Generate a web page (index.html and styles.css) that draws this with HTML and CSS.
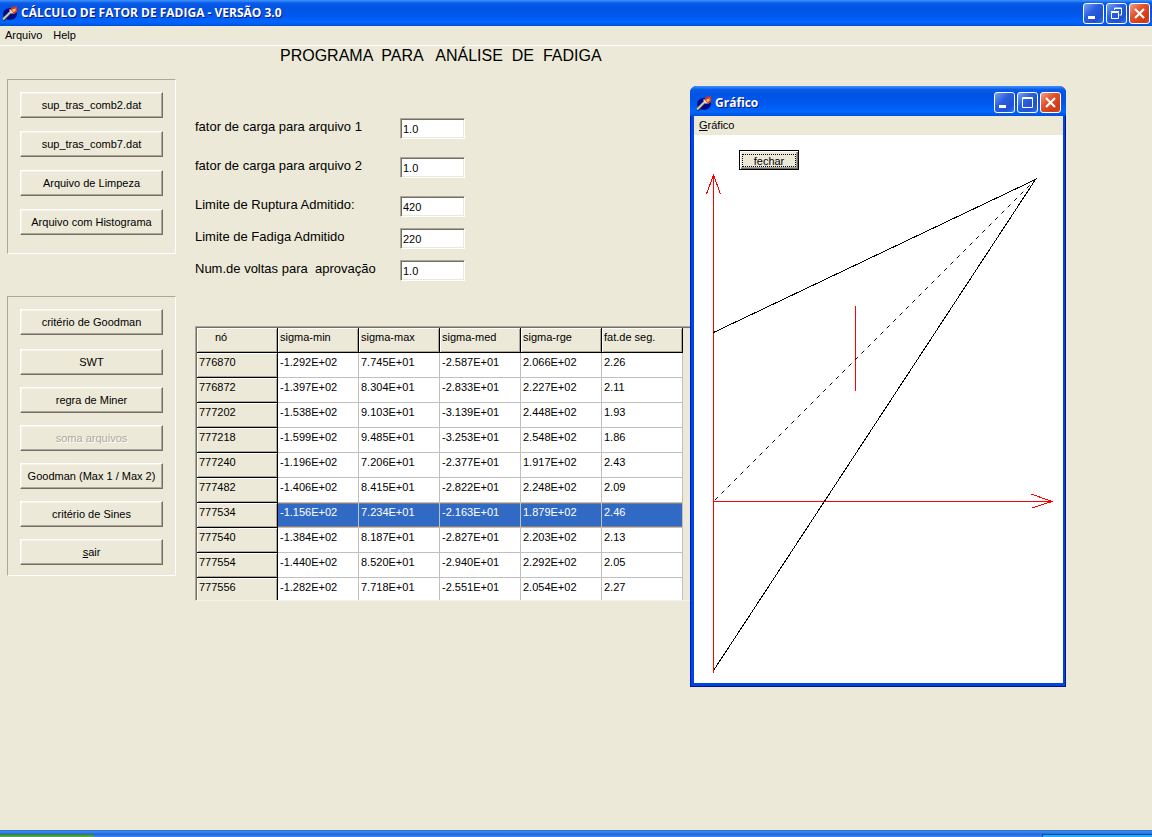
FILE: index.html
```html
<!DOCTYPE html>
<html lang="pt-BR">
<head>
<meta charset="utf-8">
<title>Cálculo de Fator de Fadiga</title>
<link rel="stylesheet" href="styles.css">
</head>
<body>
<svg width="0" height="0" class="defs" aria-hidden="true">
  <symbol id="torch" viewBox="0 0 16 16">
    <ellipse cx="8" cy="9" rx="7" ry="6" fill="#000a8c"/>
    <path d="M1 15L10 6" stroke="#222" stroke-width="3.600"/>
    <path d="M1 14.500L10 5.500" stroke="#c8c8c8" stroke-width="2.200"/>
    <path d="M7 4.500l3 0 3 4-4 0z" fill="#ddd"/>
    <path d="M9 5V2l2 1 1-3 1 2 2-1v6l-3 2z" fill="#e8301c"/>
    <path d="M10.500 6V4l2 0 1-1v3l-2 1z" fill="#ffd23c"/>
  </symbol>
  <symbol id="close" viewBox="0 0 19 19">
    <path d="M5 5l9 9M14 5l-9 9" stroke="#fff" stroke-width="2.200"/>
  </symbol>
  <symbol id="minimize" viewBox="0 0 19 19"><path d="M4 12h7v3H4z" fill="#fff"/></symbol>
</svg>

<header class="titlebar">
  <svg class="app-icon"><use href="#torch"/></svg>
  <h1 class="title">CÁLCULO DE FATOR DE FADIGA - VERSÃO 3.0</h1>
  <div class="controls">
    <button class="control" aria-label="Minimizar"><svg><use href="#minimize"/></svg></button>
    <button class="control" aria-label="Restaurar"><svg viewBox="0 0 19 19"><path d="M7.500 6V4h7v7h-2M7 4.500h8" fill="none" stroke="#fff"/><path d="M4.500 8.500h7v6h-7zM4 7.500h8" fill="none" stroke="#fff"/></svg></button>
    <button class="control control-close" aria-label="Fechar janela"><svg><use href="#close"/></svg></button>
  </div>
</header>
<nav class="menubar">
  <button class="menu">Arquivo</button>
  <button class="menu">Help</button>
</nav>

<main class="workspace">
  <h2 class="heading">PROGRAMA  PARA   ANÁLISE  DE  FADIGA</h2>
  <div class="columns">
    <div class="sidebar">
      <section class="panel">
        <button class="btn">sup_tras_comb2.dat</button>
        <button class="btn">sup_tras_comb7.dat</button>
        <button class="btn">Arquivo de Limpeza</button>
        <button class="btn">Arquivo com Histograma</button>
      </section>
      <section class="panel panel-criteria">
        <button class="btn btn-first">critério de Goodman</button>
        <button class="btn">SWT</button>
        <button class="btn">regra de Miner</button>
        <button class="btn" disabled>soma arquivos</button>
        <button class="btn">Goodman (Max 1 / Max 2)</button>
        <button class="btn">critério de Sines</button>
        <button class="btn"><u>s</u>air</button>
      </section>
    </div>
    <div class="content">
      <form class="form">
        <div class="fields fields-load">
          <label for="f1">fator de carga para arquivo 1</label><input id="f1" type="text" value="1.0">
          <label for="f2">fator de carga para arquivo 2</label><input id="f2" type="text" value="1.0">
        </div>
        <div class="fields">
          <label for="rup">Limite de Ruptura Admitido:</label><input id="rup" type="text" value="420">
          <label for="fad">Limite de Fadiga Admitido</label><input id="fad" type="text" value="220">
          <label for="vol">Num.de voltas para  aprovação</label><input id="vol" type="text" value="1.0">
        </div>
      </form>
      <div class="grid-box">
        <table class="grid">
          <thead><tr><th class="node-head">nó</th><th>sigma-min</th><th>sigma-max</th><th>sigma-med</th><th>sigma-rge</th><th>fat.de seg.</th></tr></thead>
          <tbody>
            <tr><th>776870</th><td>-1.292E+02</td><td>7.745E+01</td><td>-2.587E+01</td><td>2.066E+02</td><td>2.26</td></tr>
            <tr><th>776872</th><td>-1.397E+02</td><td>8.304E+01</td><td>-2.833E+01</td><td>2.227E+02</td><td>2.11</td></tr>
            <tr><th>777202</th><td>-1.538E+02</td><td>9.103E+01</td><td>-3.139E+01</td><td>2.448E+02</td><td>1.93</td></tr>
            <tr><th>777218</th><td>-1.599E+02</td><td>9.485E+01</td><td>-3.253E+01</td><td>2.548E+02</td><td>1.86</td></tr>
            <tr><th>777240</th><td>-1.196E+02</td><td>7.206E+01</td><td>-2.377E+01</td><td>1.917E+02</td><td>2.43</td></tr>
            <tr><th>777482</th><td>-1.406E+02</td><td>8.415E+01</td><td>-2.822E+01</td><td>2.248E+02</td><td>2.09</td></tr>
            <tr class="selected"><th>777534</th><td>-1.156E+02</td><td>7.234E+01</td><td>-2.163E+01</td><td>1.879E+02</td><td>2.46</td></tr>
            <tr><th>777540</th><td>-1.384E+02</td><td>8.187E+01</td><td>-2.827E+01</td><td>2.203E+02</td><td>2.13</td></tr>
            <tr><th>777554</th><td>-1.440E+02</td><td>8.520E+01</td><td>-2.940E+01</td><td>2.292E+02</td><td>2.05</td></tr>
            <tr class="last"><th>777556</th><td>-1.282E+02</td><td>7.718E+01</td><td>-2.551E+01</td><td>2.054E+02</td><td>2.27</td></tr>
          </tbody>
        </table>
      </div>
    </div>
  </div>
</main>

<section class="window" aria-label="Gráfico">
  <header class="titlebar window-title">
    <svg class="app-icon"><use href="#torch"/></svg>
    <h2 class="title">Gráfico</h2>
    <div class="controls">
      <button class="control" aria-label="Minimizar"><svg><use href="#minimize"/></svg></button>
      <button class="control" aria-label="Maximizar"><svg viewBox="0 0 19 19"><path d="M4.500 4.500h10v10h-10zM4 5.500h11" fill="none" stroke="#fff"/></svg></button>
      <button class="control control-close" aria-label="Fechar gráfico"><svg><use href="#close"/></svg></button>
    </div>
  </header>
  <nav class="menubar window-menu"><button class="menu"><u>G</u>ráfico</button></nav>
  <div class="chart-area">
    <svg class="chart" viewBox="0 0 369 548" fill="none" role="img" aria-label="Diagrama de Goodman">
      <g shape-rendering="crispEdges">
        <path d="M19.500 40V538M19 366.500H357M12.500 59L19.500 40L26.500 59M337 359L358 366.500L338 373" stroke="#f00"/>
        <path d="M161.500 171V256" stroke="#f00"/>
        <path d="M19.500 197.500L341.500 44.500L19.500 535.500" stroke="#000"/>
      </g>
      <path d="M21 365L341 45" stroke="#000" stroke-dasharray="4 5"/>
    </svg>
    <button class="btn btn-close-chart"><span>fechar</span></button>
  </div>
</section>

<footer class="taskbar"><div class="start"></div><div class="tray"></div></footer>
</body>
</html>
```
FILE: styles.css
```css
* { box-sizing: border-box; }

body {
  margin: 0;
  min-height: 100vh;
  display: flex;
  flex-direction: column;
  position: relative;
  background: #ece9d8;
  color: #000;
  font: 11px/13px "Liberation Sans", Arial, sans-serif;
}

button, input { font: inherit; color: inherit; }
h1, h2 { margin: 0; }
.defs { position: absolute; }

.titlebar {
  display: flex;
  align-items: center;
  height: 26px;
  padding: 0 2px;
  background: linear-gradient(#3d95ff 0, #0a5ae8 12%, #0054e3 30%, #0058ee 60%, #0066ff 85%, #0050d8 100%);
}
.app-icon { width: 16px; height: 16px; margin-right: 3px; }
.title {
  flex: 1;
  color: #fff;
  font: bold 12px/16px "Open Sans", "Noto Sans", sans-serif;
  text-shadow: 1px 1px #0a1883;
}
.controls { display: flex; gap: 2px; }
.control {
  width: 21px;
  height: 21px;
  padding: 0;
  border: 1px solid #fff;
  border-radius: 3px;
  background: linear-gradient(135deg, #7ba2f0, #2a5fe0 40%, #1f50d0 75%, #2f73f5);
}
.control svg { display: block; width: 19px; height: 19px; }
.control-close { background: linear-gradient(135deg, #f0a088, #e2512b 40%, #cf3a12 80%, #d8502a); }

.menubar {
  display: flex;
  gap: 11px;
  height: 20px;
  padding: 3px 5px;
  border-bottom: 1px solid #fff;
}
.menu { padding: 0; border: 0; background: none; line-height: 13px; }

.workspace { flex: 1; }
.heading {
  padding: 0 0 0 280px;
  font-size: 16px;
  font-weight: normal;
  line-height: 20px;
  white-space: pre;
}
.columns { display: flex; gap: 19px; padding: 13px 7px 0; }
.sidebar { width: 169px; flex: none; }
.panel {
  display: grid;
  gap: 13px;
  padding: 12px 12px 18px;
  border: 1px solid;
  border-color: #aca899 #fff #fff #aca899;
}
.panel-criteria { margin-top: 42px; gap: 12px; padding-bottom: 10px; }

.btn {
  height: 26px;
  padding: 0;
  border: 1px solid;
  border-color: #fff #716f64 #716f64 #fff;
  background: #ece9d8;
  box-shadow: inset -1px -1px #aca899, inset 1px 1px #f6f4ea;
}
.btn-first { margin-bottom: 2px; }
.btn:disabled { color: #aca899; text-shadow: 1px 1px #fff; }

.content { flex: 1; padding-top: 39px; }
.fields {
  display: grid;
  grid-template-columns: 190px 65px;
  column-gap: 15px;
  row-gap: 11px;
}
.fields-load { row-gap: 18px; margin-bottom: 18px; }
.fields label { font-size: 13px; line-height: 17px; white-space: pre; }
.fields input {
  width: 65px;
  height: 21px;
  padding: 0 2px;
  border: 1px solid;
  border-color: #aca899 #fff #fff #aca899;
  border-radius: 0;
  background: #fff;
  box-shadow: inset 1px 1px #716f64, inset -1px -1px #ece9d8;
}

.grid-box {
  width: 502px;
  margin-top: 45px;
  border: 1px solid;
  border-color: #aca899 #fff #f6f4ea #aca899;
  box-shadow: inset 1px 1px #716f64;
  padding: 1px 0 0 1px;
}
.grid { table-layout: fixed; width: 486px; border-collapse: separate; border-spacing: 0; }
.grid th, .grid td {
  height: 25px;
  padding: 3px 2px;
  border: solid #c0c0c0;
  border-width: 0 1px 1px 0;
  background: #fff;
  text-align: left;
  vertical-align: top;
  font-weight: normal;
}
.grid th {
  border-color: #000;
  background: #ece9d8;
  box-shadow: inset 1px 1px #fff, inset -1px -1px #aca899;
}
.grid .node-head { padding-left: 18px; }
.grid .selected td {
  background: #316ac5;
  color: #fff;
  box-shadow: inset 0 1px #8c7f78, inset 0 -1px #8c7f78;
}
.grid .last th, .grid .last td { height: 22px; border-bottom: 0; }
.grid .last th { box-shadow: inset 1px 1px #fff, inset -1px 0 #aca899; }

.window {
  position: absolute;
  left: 690px;
  top: 86px;
  width: 376px;
  padding: 0 3px 4px 4px;
  border-radius: 7px 7px 0 0;
  background: #0045e0;
  box-shadow: inset -1px -1px #00138c, inset 1px 0 #0019cf;
}
.window-title {
  height: 30px;
  margin: 0 -3px 0 -4px;
  padding: 3px 5px 0 6px;
  border-radius: 7px 7px 0 0;
}
.window-menu { border: 0; height: 19px; background: #ece9d8; }
.chart-area { position: relative; background: #fff; }
.chart { display: block; width: 100%; }
.btn-close-chart {
  position: absolute;
  left: 45px;
  top: 15px;
  width: 60px;
  height: 20px;
  border-color: #000;
  padding: 2px;
  box-shadow: inset 1px 1px #fff, inset -1px -1px #716f64, inset -2px -2px #aca899;
}
.btn-close-chart span { display: block; height: 13px; border: 1px dotted #000; line-height: 12px; }

.taskbar {
  display: flex;
  justify-content: space-between;
  height: 7px;
  padding-top: 1px;
  background: linear-gradient(#2c6fc0 0, #3a8af0 25%, #2663dc 60%, #3f87f0 100%);
}
.start { width: 94px; margin-top: 3px; background: linear-gradient(#2d7a2d, #5fb35f); border-radius: 0 3px 0 0; }
.tray { width: 110px; margin-top: 3px; border-top: 1px solid #0c4aa8; border-left: 1px solid #0c4aa8; background: #19b0f2; }
```
